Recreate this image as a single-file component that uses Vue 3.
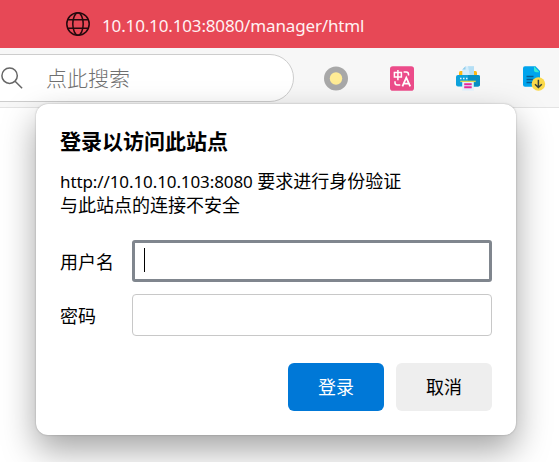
<script setup>
import { ref } from 'vue'

const username = ref('')
const password = ref('')
</script>

<template>
  <div class="browser">
    <header class="address">
      <svg class="globe" viewBox="0 0 24 24" width="24" height="24" fill="none" stroke="#24090d" stroke-width="1.5">
        <circle cx="12" cy="12" r="11.2" />
        <ellipse cx="12" cy="12" rx="5.2" ry="11.2" />
        <path d="M1.8 7.7h20.4M1.8 16.3h20.4" />
      </svg>
      <span class="url">10.10.10.103:8080/manager/html</span>
    </header>

    <div class="toolbar">
      <div class="search">
        <svg class="lens" viewBox="0 0 24 24" width="24" height="24" fill="none" stroke="#666" stroke-width="1.5">
          <circle cx="9.6" cy="9.7" r="7.7" />
          <path d="M15.1 15.3l7 7" />
        </svg>
        <span class="hint">点此搜索</span>
      </div>
      <div class="extensions">
        <svg viewBox="0 0 24 25" width="24" height="25">
          <circle cx="12" cy="12.5" r="12" fill="#a8a8a8" />
          <circle cx="12" cy="12.5" r="6.2" fill="#ffec95" />
        </svg>
        <svg viewBox="0 0 24 25" width="24" height="25">
          <rect y="0.3" width="24" height="24.4" rx="2.8" fill="#ec4c8a" />
          <g fill="none" stroke="#fff" stroke-width="1.5">
            <path d="M4.4 6.6h7v4.3h-7zM7.900 4v10.200" />
            <path d="M13.600 6h2.600q2.300 0 2.300 2.300v1.200M5 15.200v1.600q0 2.200 2.200 2.200h3.100" />
            <path d="M12.400 20.300l3.900-8.600 3.900 8.600M14 17.700h4.600" stroke-width="1.800" />
          </g>
        </svg>
        <svg viewBox="0 0 24 25" width="24" height="25">
          <path d="M3 10V6.500Q3 5 4.500 5h15Q21 5 21 6.500V10z" fill="#fdb813" />
          <path d="M6.300 10V3.500L9.500.3H18V10z" fill="#d4edfb" />
          <path d="M12 .3h6V10h-4z" fill="#b5dff5" />
          <path d="M6.300 3.500h3.200V.3z" fill="#91cdec" />
          <rect y="9" width="24" height="11.500" rx="2" fill="#0da2dc" />
          <path d="M12 9h10q2 0 2 2v7.500q0 2-2 2H12z" fill="#078fc4" />
          <path d="M4 12.500h1.500M7 12.500h1.500M10 12.500h1.500" stroke="#e0f6ff" stroke-width="1.300" />
          <path d="M4.300 15.400h15.400" stroke="#dcd650" stroke-width="1.400" />
          <path d="M6.200 16h11.600v8.700H6.200z" fill="#e2f3fc" />
          <path d="M8.200 18.200h7.500M8.200 21.300h7.500" stroke="#e8279b" stroke-width="1.900" />
        </svg>
        <svg viewBox="0 0 24 25" width="24" height="25">
          <path d="M3 .3h10.500L18 5v15.800H3Q1 20.800 1 18.800V2.300Q1 .3 3 .3z" fill="#00a4ed" />
          <path d="M12 .3L17.500 6.200H14q-2 0-2-2z" fill="#38ead0" />
          <path d="M4.500 10.600h7M4.500 13.500h7M4.500 16.400h6" stroke="#075b91" stroke-width="1.500" />
          <circle cx="16.400" cy="18" r="6.800" fill="#fbd949" />
          <path d="M16.400 13.700v7.600M13 18.300l3.400 3.200 3.400-3.200" fill="none" stroke="#35423d" stroke-width="1.500" />
        </svg>
      </div>
    </div>

    <form class="dialog" @submit.prevent>
      <h1>登录以访问此站点</h1>
      <p><span class="origin">http://10.10.10.103:8080</span> 要求进行身份验证<br />与此站点的连接不安全</p>
      <div class="fields">
        <label for="user">用户名</label>
        <div class="field focused">
          <span class="caret"></span>
          <input id="user" v-model="username" type="text" />
        </div>
        <label for="pass">密码</label>
        <div class="field">
          <input id="pass" v-model="password" type="password" />
        </div>
      </div>
      <div class="actions">
        <button class="primary" type="submit">登录</button>
        <button type="button">取消</button>
      </div>
    </form>
  </div>
</template>

<style>
body {
  margin: 0;
  overflow: hidden;
}
</style>

<style scoped>
* {
  box-sizing: border-box;
}
.browser {
  position: relative;
  height: 462px;
  overflow: hidden;
  background: #fff;
  color: #000;
  font-family: "Noto Sans", "Noto Sans CJK SC", sans-serif;
}
.address {
  display: flex;
  align-items: center;
  gap: 12px;
  height: 48px;
  padding-left: 66px;
  background: #e74856;
  color: #fff2f3;
}
.url {
  padding-top: 3px;
  font-size: 17px;
  letter-spacing: -0.15px;
  line-height: 24px;
  white-space: nowrap;
}
.toolbar {
  display: flex;
  align-items: flex-start;
  height: 60px;
  padding-top: 6px;
  background: #f7f7f7;
  border-bottom: 1px solid #e3e3e3;
}
.search {
  display: flex;
  align-items: center;
  width: 324px;
  height: 48px;
  margin-left: -30px;
  padding-left: 29px;
  background: #fff;
  border: 1.5px solid #cdcdcd;
  border-radius: 24px;
}
.hint {
  margin-left: 22px;
  padding-bottom: 2px;
  color: #707070;
  font-family: "Noto Sans CJK SC", sans-serif;
  font-size: 21px;
  font-weight: 300;
  line-height: 28px;
}
.extensions {
  display: flex;
  gap: 42px;
  padding: 12px 0 0 30px;
}
.dialog {
  position: absolute;
  top: 104px;
  left: 36px;
  width: 480px;
  height: 331px;
  padding: 23px 24px 24px;
  background: #fff;
  border-radius: 12px;
  box-shadow: 0 0 2px rgba(0, 0, 0, 0.28), 0 15px 34px rgba(0, 0, 0, 0.36);
}
h1 {
  margin: 0 0 14px;
  font-size: 21px;
  font-weight: 700;
  line-height: 28px;
}
p {
  height: 48px;
  margin: 0 0 23px;
  font-size: 18px;
  line-height: 24px;
  white-space: nowrap;
}
.origin {
  font-size: 17px;
  letter-spacing: -0.1px;
  line-height: 1;
}
.fields {
  display: grid;
  grid-template-columns: 72px 360px;
  grid-auto-rows: 42px;
  row-gap: 12px;
  align-items: center;
  font-size: 18px;
}
.field {
  display: flex;
  align-items: center;
  height: 42px;
  padding: 0 11px;
  border: 1px solid #c8c8c8;
  border-radius: 4px;
}
.field.focused {
  padding: 0 9px;
  border: 3px solid #80868e;
  border-radius: 3px;
}
.field input {
  flex: 1;
  min-width: 0;
  height: 30px;
  padding: 0;
  border: 0;
  outline: 0;
  background: transparent;
  font: inherit;
}
.caret {
  width: 1px;
  height: 24px;
  margin-top: -2px;
  background: #000;
}
.actions {
  display: flex;
  justify-content: flex-end;
  gap: 12px;
  margin-top: 27px;
}
button {
  width: 96px;
  height: 48px;
  padding: 0 0 2px;
  border: 0;
  border-radius: 6px;
  background: #eee;
  color: #000;
  font-family: "Noto Sans CJK SC", sans-serif;
  font-size: 18px;
  line-height: 24px;
}
.primary {
  background: #0078d7;
  color: #fff;
}
</style>
